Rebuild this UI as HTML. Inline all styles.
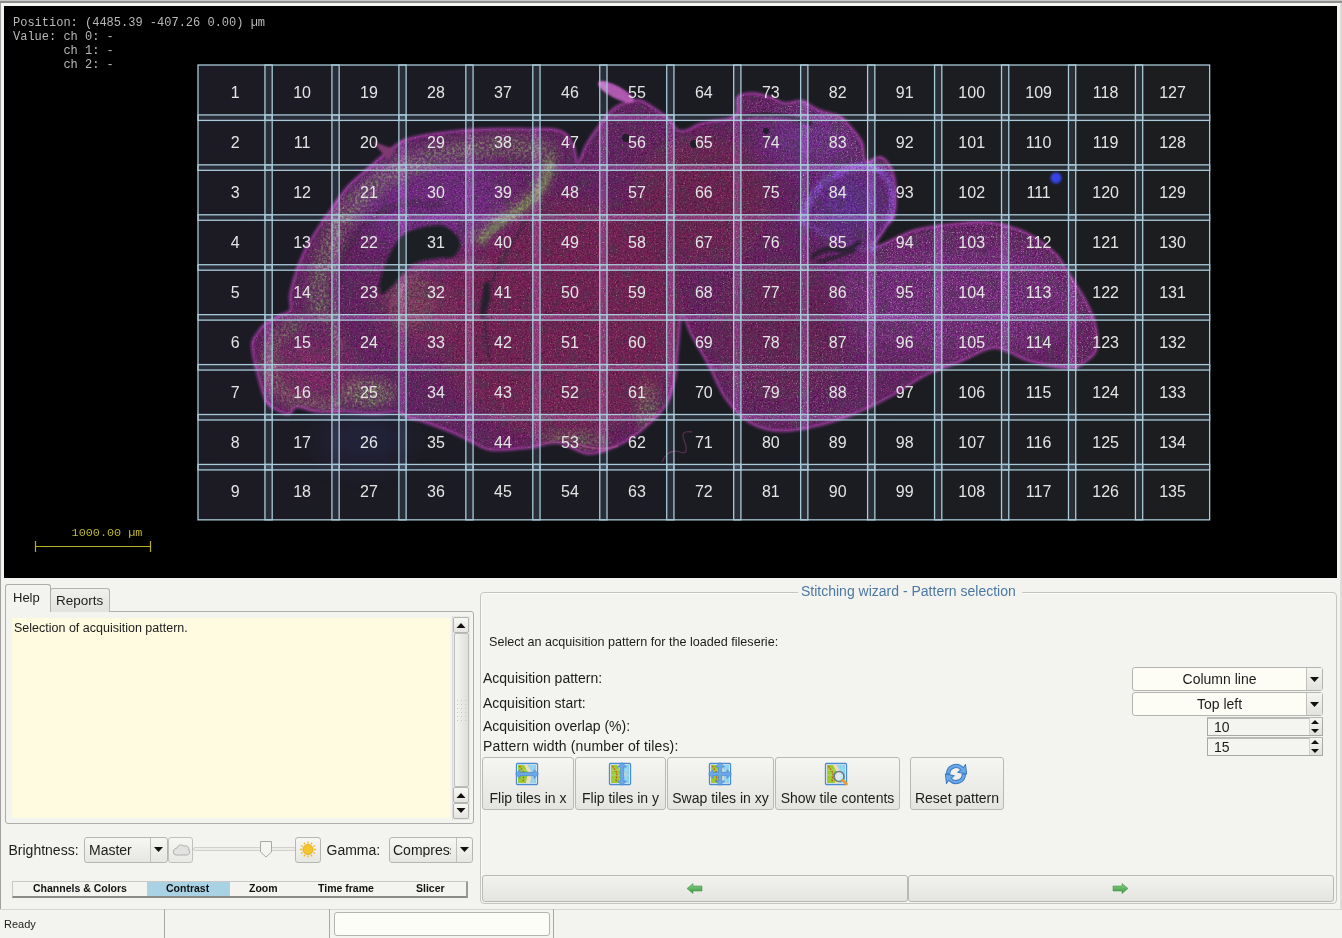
<!DOCTYPE html>
<html><head><meta charset="utf-8">
<style>
*{box-sizing:border-box;margin:0;padding:0}
html,body{width:1342px;height:938px;overflow:hidden;background:#f3f3ef;font-family:"Liberation Sans",sans-serif;color:#1a1a1a}
.a{position:absolute}
.t{position:absolute;white-space:nowrap;line-height:1}
#viewer{left:4px;top:6px;width:1333px;height:572px;background:#000;overflow:hidden}
#ov{left:9px;top:9.5px;font-family:"Liberation Mono",monospace;font-size:12px;line-height:14.3px;color:#b8b8b8;white-space:pre}
svg text{font-family:"Liberation Sans",sans-serif;font-size:16px;fill:#e4e4e4;text-anchor:middle}
.btn{position:absolute;border:1px solid #b4b4ae;border-radius:3px;background:linear-gradient(#f6f6f2,#e6e6e2)}
.lbl{position:absolute;white-space:nowrap;font-size:14px;line-height:1;color:#1c1c1c}
</style></head><body>
<div class="a" style="left:0;top:0;width:1342px;height:1px;background:#c9c9c7"></div>
<div class="a" style="left:0;top:1px;width:1342px;height:2px;background:#8e8e8c"></div>
<div class="a" style="left:0;top:3px;width:1px;height:906px;background:#a0a09e"></div>
<div class="a" style="left:1px;top:3px;width:1339px;height:3px;background:#f6f6f2"></div>
<div class="a" style="left:1340px;top:3px;width:2px;height:906px;background:#dcdcd8"></div>
<div id="viewer" class="a">
<svg width="1333" height="572" viewBox="4 6 1333 572" style="position:absolute;left:0;top:0">
<rect x="198.0" y="65.0" width="1011.6" height="454.8" fill="url(#bgG)"/>
<defs><linearGradient id="bgG" x1="0" y1="0" x2="1" y2="0"><stop offset="0" stop-color="#0d070e"/><stop offset="0.5" stop-color="#0c080b"/><stop offset="1" stop-color="#0c0a07"/></linearGradient></defs>
<g id="tis">
<defs>
 <clipPath id="tc"><path d="M252,347 C251.5,337.8 255.8,335.8 258,332 C260.2,328.2 261.7,326.7 265,324 C268.3,321.3 273.8,318.3 278,316 C282.2,313.7 288.0,313.5 290,310 C292.0,306.5 289.0,301.3 290,295 C291.0,288.7 293.5,279.5 296,272 C298.5,264.5 301.3,257.3 305,250 C308.7,242.7 313.5,235.0 318,228 C322.5,221.0 327.0,215.0 332,208 C337.0,201.0 342.3,192.3 348,186 C353.7,179.7 360.3,175.0 366,170 C371.7,165.0 375.5,161.0 382,156 C388.5,151.0 395.5,143.8 405,140 C414.5,136.2 426.0,134.8 439,133 C452.0,131.2 468.2,129.7 483,129 C497.8,128.3 516.5,129.0 528,129 C539.5,129.0 545.7,128.2 552,129 C558.3,129.8 562.3,131.0 566,134 C569.7,137.0 572.0,142.3 574,147 C576.0,151.7 576.0,162.3 578,162 C580.0,161.7 582.7,150.8 586,145 C589.3,139.2 593.5,133.0 598,127 C602.5,121.0 607.7,113.3 613,109 C618.3,104.7 625.2,102.3 630,101 C634.8,99.7 637.5,99.5 642,101 C646.5,102.5 652.5,107.0 657,110 C661.5,113.0 665.5,115.7 669,119 C672.5,122.3 675.0,128.2 678,130 C681.0,131.8 683.5,131.0 687,130 C690.5,129.0 694.5,125.5 699,124 C703.5,122.5 709.0,121.8 714,121 C719.0,120.2 725.2,120.5 729,119 C732.8,117.5 735.5,115.7 737,112 C738.5,108.3 735.3,100.2 738,97 C740.7,93.8 747.7,93.0 753,93 C758.3,93.0 764.7,95.3 770,97 C775.3,98.7 779.7,102.3 785,103 C790.3,103.7 796.3,99.8 802,101 C807.7,102.2 812.8,107.5 819,110 C825.2,112.5 834.0,113.5 839,116 C844.0,118.5 845.2,120.7 849,125 C852.8,129.3 859.2,136.0 862,142 C864.8,148.0 862.8,158.5 866,161 C869.2,163.5 876.7,155.5 881,157 C885.3,158.5 889.5,164.3 892,170 C894.5,175.7 895.7,183.3 896,191 C896.3,198.7 895.8,209.7 894,216 C892.2,222.3 887.8,224.0 885,229 C882.2,234.0 872.0,245.8 877,246 C882.0,246.2 900.8,233.8 915,230 C929.2,226.2 948.7,224.2 962,223 C975.3,221.8 983.8,221.2 995,223 C1006.2,224.8 1018.8,228.8 1029,234 C1039.2,239.2 1049.3,247.3 1056,254 C1062.7,260.7 1064.0,266.2 1069,274 C1074.0,281.8 1081.5,292.2 1086,301 C1090.5,309.8 1094.3,318.7 1096,327 C1097.7,335.3 1098.3,344.8 1096,351 C1093.7,357.2 1086.5,361.2 1082,364 C1077.5,366.8 1077.8,368.5 1069,368 C1060.2,367.5 1041.3,364.3 1029,361 C1016.7,357.7 1006.2,348.0 995,348 C983.8,348.0 973.2,356.7 962,361 C950.8,365.3 939.2,368.5 928,374 C916.8,379.5 906.2,387.8 895,394 C883.8,400.2 873.3,405.8 861,411 C848.7,416.2 834.3,421.7 821,425 C807.7,428.3 792.8,431.3 781,431 C769.2,430.7 759.2,428.3 750,423 C740.8,417.7 732.8,408.5 726,399 C719.2,389.5 714.7,376.5 709,366 C703.3,355.5 696.5,344.3 692,336 C687.5,327.7 684.3,314.0 682,316 C679.7,318.0 679.2,337.5 678,348 C676.8,358.5 677.2,369.2 675,379 C672.8,388.8 670.5,398.5 665,407 C659.5,415.5 650.0,423.5 642,430 C634.0,436.5 626.0,442.0 617,446 C608.0,450.0 597.8,454.5 588,454 C578.2,453.5 568.0,444.0 558,443 C548.0,442.0 539.2,446.8 528,448 C516.8,449.2 500.7,451.2 491,450 C481.3,448.8 476.7,444.0 470,441 C463.3,438.0 458.7,435.2 451,432 C443.3,428.8 431.0,424.3 424,422 C417.0,419.7 413.5,419.7 409,418 C404.5,416.3 402.8,412.7 397,412 C391.2,411.3 382.7,414.0 374,414 C365.3,414.0 354.5,412.3 345,412 C335.5,411.7 325.0,412.8 317,412 C309.0,411.2 301.8,406.7 297,407 C292.2,407.3 292.7,414.3 288,414 C283.3,413.7 273.5,409.5 269,405 C264.5,400.5 263.8,396.7 261,387 C258.2,377.3 252.5,356.2 252,347 Z"/><ellipse cx="616" cy="92" rx="20" ry="6" transform="rotate(28 616 92)"/></clipPath>
 <filter id="b6" x="-50%" y="-50%" width="200%" height="200%"><feGaussianBlur stdDeviation="6"/></filter>
 <filter id="b12" x="-50%" y="-50%" width="200%" height="200%"><feGaussianBlur stdDeviation="14"/></filter>
 <filter id="b3" x="-50%" y="-50%" width="200%" height="200%"><feGaussianBlur stdDeviation="2.5"/></filter>
 <filter id="b1" x="-50%" y="-50%" width="200%" height="200%"><feGaussianBlur stdDeviation="1"/></filter>
 <filter id="tex" x="0" y="0" width="100%" height="100%">
   <feTurbulence type="fractalNoise" baseFrequency="0.55" numOctaves="2" seed="4" result="n"/>
   <feColorMatrix in="n" type="matrix" values="2.4 0.5 0 0 -0.95  2.4 0 0.5 0 -0.95  2.4 0.5 0 0 -0.95  0 0 0 0 1" result="nc"/>
   <feComposite in="SourceGraphic" in2="nc" operator="arithmetic" k1="1.1" k2="0.48" k3="0" k4="0"/>
 </filter>
 <filter id="spkw" x="0" y="0" width="100%" height="100%">
   <feTurbulence type="fractalNoise" baseFrequency="0.8" numOctaves="1" seed="11"/>
   <feColorMatrix type="matrix" values="0 0 0 0 0.95  0 0 0 0 0.9  0 0 0 0 1  0 4.0 0 0 -2.3"/>
 </filter>
 <filter id="spkg" x="0" y="0" width="100%" height="100%">
   <feTurbulence type="fractalNoise" baseFrequency="0.38" numOctaves="2" seed="21"/>
   <feColorMatrix type="matrix" values="0 0 0 0 0.4  0 0 0 0 0.72  0 0 0 0 0.15  0 0 3.0 0 -1.25"/>
 </filter>
 <filter id="mot" x="0" y="0" width="100%" height="100%">
   <feTurbulence type="fractalNoise" baseFrequency="0.09" numOctaves="3" seed="17"/>
   <feColorMatrix type="matrix" values="0 0 0 0 0.05  0 0 0 0 0.02  0 0 0 0 0.05  2.2 0 0 0 -1.0"/>
 </filter>
 <filter id="spkg2" x="0" y="0" width="100%" height="100%">
   <feTurbulence type="fractalNoise" baseFrequency="0.85" numOctaves="1" seed="33"/>
   <feColorMatrix type="matrix" values="0 0 0 0 0.45  0 0 0 0 0.8  0 0 0 0 0.25  0 4.5 0 0 -2.7"/>
 </filter>
 <mask id="wm"><rect x="180" y="60" width="1040" height="480" fill="#000"/>
   <g filter="url(#b6)" fill="none" stroke="#fff">
     <path d="M880,250 C893.7,247.0 937.2,233.2 962,232 C986.8,230.8 1010.2,234.2 1029,243 C1047.8,251.8 1065.2,268.8 1075,285 C1084.8,301.2 1089.5,327.5 1088,340 C1086.5,352.5 1069.7,356.7 1066,360 " stroke-width="22" opacity="0.9"/>
     <path d="M745,108 C754.2,108.3 783.3,106.0 800,110 C816.7,114.0 835.0,122.0 845,132 C855.0,142.0 857.5,163.7 860,170 " stroke-width="20" opacity="0.7"/>
   </g>
   <g filter="url(#b12)" fill="#fff">
     <ellipse cx="960" cy="300" rx="120" ry="55" opacity="0.75"/>
     <ellipse cx="800" cy="380" rx="80" ry="40" opacity="0.6"/>
     <ellipse cx="740" cy="260" rx="50" ry="60" opacity="0.35"/>
     <ellipse cx="660" cy="150" rx="50" ry="40" opacity="0.35"/>
     <ellipse cx="840" cy="150" rx="40" ry="30" opacity="0.5"/>
     <ellipse cx="560" cy="400" rx="60" ry="40" opacity="0.25"/>
   </g>
 </mask>
 <mask id="gm"><rect x="180" y="60" width="1040" height="480" fill="#000"/>
   <g filter="url(#b6)" fill="none" stroke="#fff" stroke-linecap="round">
     <path d="M322,312 C321.3,308.3 316.7,301.2 318,290 C319.3,278.8 324.7,258.3 330,245 C335.3,231.7 342.5,220.0 350,210 C357.5,200.0 365.0,192.5 375,185 C385.0,177.5 396.7,170.5 410,165 C423.3,159.5 439.2,155.2 455,152 C470.8,148.8 489.8,146.0 505,146 C520.2,146.0 539.2,151.0 546,152 " stroke-width="20" opacity="0.75"/>
     <path d="M550,160 C548.7,164.2 546.7,177.3 542,185 C537.3,192.7 529.7,199.8 522,206 C514.3,212.2 503.3,216.3 496,222 C488.7,227.7 481.0,237.0 478,240 " stroke-width="12"/>
     <path d="M300,322 C296.3,324.2 283.0,328.7 278,335 C273.0,341.3 270.3,351.5 270,360 C269.7,368.5 271.0,379.0 276,386 C281.0,393.0 289.3,399.0 300,402 C310.7,405.0 333.3,403.7 340,404 " stroke-width="11" opacity="0.8"/>
     <path d="M330,322 C331.3,324.7 337.0,333.0 338,338 C339.0,343.0 336.3,349.7 336,352 " stroke-width="10" opacity="0.5"/>
   </g>
   <g filter="url(#b6)" fill="#fff">
     <ellipse cx="368" cy="393" rx="28" ry="14"/>
     <ellipse cx="648" cy="408" rx="10" ry="28" opacity="0.8"/>
     <ellipse cx="575" cy="440" rx="35" ry="7" opacity="0.8"/>
     <ellipse cx="410" cy="300" rx="25" ry="30" opacity="0.35"/>
   </g>
 </mask>
</defs>
<g clip-path="url(#tc)">
 <g filter="url(#tex)">
  <rect x="240" y="80" width="870" height="380" fill="#5a0e50"/>
  <g filter="url(#b12)">
    <ellipse cx="560" cy="320" rx="125" ry="120" fill="#6a0c40"/>
    <ellipse cx="700" cy="200" rx="70" ry="65" fill="#640c3e"/>
    <ellipse cx="310" cy="370" rx="45" ry="35" fill="#761452"/>
    <ellipse cx="950" cy="300" rx="130" ry="60" fill="#6a1268"/>
    <ellipse cx="780" cy="330" rx="70" ry="70" fill="#5c0a42"/>
    <ellipse cx="850" cy="205" rx="38" ry="34" fill="#561a80"/>
    <ellipse cx="810" cy="140" rx="50" ry="28" fill="#661e78"/>
    <ellipse cx="430" cy="200" rx="85" ry="50" fill="#681670"/>
    <ellipse cx="420" cy="310" rx="40" ry="40" fill="#701448"/>
  </g>
  <path d="M800,222 C803.7,215.7 812.0,193.3 822,184 C832.0,174.7 849.5,167.5 860,166 C870.5,164.5 879.5,169.3 885,175 C890.5,180.7 892.8,190.5 893,200 C893.2,209.5 889.8,223.7 886,232 C882.2,240.3 872.7,247.0 870,250 " fill="none" stroke="#8643d3" stroke-width="6" filter="url(#b3)" opacity="0.85"/>
  <path d="M802,222 C806.7,224.3 819.5,231.3 830,236 C840.5,240.7 859.2,247.7 865,250 " fill="none" stroke="#7a3ac0" stroke-width="4" filter="url(#b3)" opacity="0.6"/>
  <!-- cortex inner boundary (darker) -->
  <path d="M334,400 C334.0,385.2 332.3,334.8 334,311 C335.7,287.2 338.3,271.8 344,257 C349.7,242.2 358.3,230.7 368,222 C377.7,213.3 389.5,207.8 402,205 C414.5,202.2 436.2,205.0 443,205 " fill="none" stroke="#30102c" stroke-width="5" filter="url(#b3)" opacity="0.6"/>
  <!-- hippocampus lobe boundary -->
  <path d="M392,304 C396.5,298.3 407.7,276.8 419,270 C430.3,263.2 448.2,264.3 460,263 C471.8,261.7 485.0,262.2 490,262 " fill="none" stroke="#a0307a" stroke-width="4" filter="url(#b3)" opacity="0.7"/>
  <path d="M525,222 C521.7,227.5 510.7,244.7 505,255 C499.3,265.3 494.3,273.2 491,284 C487.7,294.8 485.2,307.3 485,320 C484.8,332.7 489.2,353.3 490,360 " fill="none" stroke="#28102a" stroke-width="3.5" filter="url(#b1)" opacity="0.55"/>
 </g>
  <rect x="240" y="80" width="870" height="380" filter="url(#mot)" opacity="0.6"/>
  <rect x="240" y="80" width="870" height="380" filter="url(#spkg2)" opacity="0.4"/>
  <rect x="240" y="80" width="870" height="380" filter="url(#spkw)" mask="url(#wm)" opacity="0.6"/>
  <rect x="240" y="80" width="870" height="380" fill="#70b040" opacity="0.16" mask="url(#gm)"/>
  <rect x="240" y="80" width="870" height="380" filter="url(#spkg)" mask="url(#gm)" opacity="0.6"/>
  <path d="M551,158 C549.8,162.3 548.5,176.0 544,184 C539.5,192.0 531.7,199.3 524,206 C516.3,212.7 505.3,218.0 498,224 C490.7,230.0 483.0,239.0 480,242 " fill="none" stroke="#88d040" stroke-width="7" opacity="0.35" filter="url(#b3)"/>
  <!-- dark features -->
  <path d="M457,236 C454.2,232.7 449.2,227.3 443,226 C436.8,224.7 426.8,226.3 420,228 C413.2,229.7 407.3,231.0 402,236 C396.7,241.0 391.7,250.3 388,258 C384.3,265.7 381.0,276.0 380,282 C379.0,288.0 380.0,293.3 382,294 C384.0,294.7 386.8,291.0 392,286 C397.2,281.0 405.3,268.7 413,264 C420.7,259.3 431.3,259.2 438,258 C444.7,256.8 449.3,259.0 453,257 C456.7,255.0 459.3,249.5 460,246 C460.7,242.5 459.8,239.3 457,236 Z" fill="#0c0810" filter="url(#b1)"/>
  <path d="M484,283 L489,281 L490,300 L482,320 L480,314 Z" fill="#140a14" filter="url(#b1)"/>
  <path d="M812,258 Q822,246 838,250 Q848,252 860,242" fill="none" stroke="#140a14" stroke-width="4" filter="url(#b1)"/>
  <path d="M818,262 Q835,258 856,250" fill="none" stroke="#140a14" stroke-width="2.5" filter="url(#b1)"/>
  <circle cx="626" cy="138" r="4" fill="#140a14"/>
  <circle cx="694" cy="144" r="4" fill="#140a14"/>
  <circle cx="766" cy="131" r="3" fill="#140a14"/>
  <path d="M738,118 Q760,112 785,116 Q800,119 812,124" stroke="#1a0c1a" stroke-width="3.5" fill="none" filter="url(#b1)"/>
</g>
<path d="M252,347 C251.5,337.8 255.8,335.8 258,332 C260.2,328.2 261.7,326.7 265,324 C268.3,321.3 273.8,318.3 278,316 C282.2,313.7 288.0,313.5 290,310 C292.0,306.5 289.0,301.3 290,295 C291.0,288.7 293.5,279.5 296,272 C298.5,264.5 301.3,257.3 305,250 C308.7,242.7 313.5,235.0 318,228 C322.5,221.0 327.0,215.0 332,208 C337.0,201.0 342.3,192.3 348,186 C353.7,179.7 360.3,175.0 366,170 C371.7,165.0 375.5,161.0 382,156 C388.5,151.0 395.5,143.8 405,140 C414.5,136.2 426.0,134.8 439,133 C452.0,131.2 468.2,129.7 483,129 C497.8,128.3 516.5,129.0 528,129 C539.5,129.0 545.7,128.2 552,129 C558.3,129.8 562.3,131.0 566,134 C569.7,137.0 572.0,142.3 574,147 C576.0,151.7 576.0,162.3 578,162 C580.0,161.7 582.7,150.8 586,145 C589.3,139.2 593.5,133.0 598,127 C602.5,121.0 607.7,113.3 613,109 C618.3,104.7 625.2,102.3 630,101 C634.8,99.7 637.5,99.5 642,101 C646.5,102.5 652.5,107.0 657,110 C661.5,113.0 665.5,115.7 669,119 C672.5,122.3 675.0,128.2 678,130 C681.0,131.8 683.5,131.0 687,130 C690.5,129.0 694.5,125.5 699,124 C703.5,122.5 709.0,121.8 714,121 C719.0,120.2 725.2,120.5 729,119 C732.8,117.5 735.5,115.7 737,112 C738.5,108.3 735.3,100.2 738,97 C740.7,93.8 747.7,93.0 753,93 C758.3,93.0 764.7,95.3 770,97 C775.3,98.7 779.7,102.3 785,103 C790.3,103.7 796.3,99.8 802,101 C807.7,102.2 812.8,107.5 819,110 C825.2,112.5 834.0,113.5 839,116 C844.0,118.5 845.2,120.7 849,125 C852.8,129.3 859.2,136.0 862,142 C864.8,148.0 862.8,158.5 866,161 C869.2,163.5 876.7,155.5 881,157 C885.3,158.5 889.5,164.3 892,170 C894.5,175.7 895.7,183.3 896,191 C896.3,198.7 895.8,209.7 894,216 C892.2,222.3 887.8,224.0 885,229 C882.2,234.0 872.0,245.8 877,246 C882.0,246.2 900.8,233.8 915,230 C929.2,226.2 948.7,224.2 962,223 C975.3,221.8 983.8,221.2 995,223 C1006.2,224.8 1018.8,228.8 1029,234 C1039.2,239.2 1049.3,247.3 1056,254 C1062.7,260.7 1064.0,266.2 1069,274 C1074.0,281.8 1081.5,292.2 1086,301 C1090.5,309.8 1094.3,318.7 1096,327 C1097.7,335.3 1098.3,344.8 1096,351 C1093.7,357.2 1086.5,361.2 1082,364 C1077.5,366.8 1077.8,368.5 1069,368 C1060.2,367.5 1041.3,364.3 1029,361 C1016.7,357.7 1006.2,348.0 995,348 C983.8,348.0 973.2,356.7 962,361 C950.8,365.3 939.2,368.5 928,374 C916.8,379.5 906.2,387.8 895,394 C883.8,400.2 873.3,405.8 861,411 C848.7,416.2 834.3,421.7 821,425 C807.7,428.3 792.8,431.3 781,431 C769.2,430.7 759.2,428.3 750,423 C740.8,417.7 732.8,408.5 726,399 C719.2,389.5 714.7,376.5 709,366 C703.3,355.5 696.5,344.3 692,336 C687.5,327.7 684.3,314.0 682,316 C679.7,318.0 679.2,337.5 678,348 C676.8,358.5 677.2,369.2 675,379 C672.8,388.8 670.5,398.5 665,407 C659.5,415.5 650.0,423.5 642,430 C634.0,436.5 626.0,442.0 617,446 C608.0,450.0 597.8,454.5 588,454 C578.2,453.5 568.0,444.0 558,443 C548.0,442.0 539.2,446.8 528,448 C516.8,449.2 500.7,451.2 491,450 C481.3,448.8 476.7,444.0 470,441 C463.3,438.0 458.7,435.2 451,432 C443.3,428.8 431.0,424.3 424,422 C417.0,419.7 413.5,419.7 409,418 C404.5,416.3 402.8,412.7 397,412 C391.2,411.3 382.7,414.0 374,414 C365.3,414.0 354.5,412.3 345,412 C335.5,411.7 325.0,412.8 317,412 C309.0,411.2 301.8,406.7 297,407 C292.2,407.3 292.7,414.3 288,414 C283.3,413.7 273.5,409.5 269,405 C264.5,400.5 263.8,396.7 261,387 C258.2,377.3 252.5,356.2 252,347 Z" fill="none" stroke="#c83cc0" stroke-width="3" opacity="0.5" filter="url(#b1)"/>
<ellipse cx="616" cy="92" rx="20" ry="6" transform="rotate(28 616 92)" fill="#d060c8" opacity="0.75" filter="url(#b1)"/>
<circle cx="1056" cy="178" r="5.5" fill="#2a36e8" filter="url(#b1)"/>
<path d="M662,462 Q668,448 680,452 Q690,456 684,440 Q680,430 692,432" fill="none" stroke="#7a2860" stroke-width="1.3" opacity="0.6"/>
<path d="M578,444 Q600,452 618,446" fill="none" stroke="#c04a90" stroke-width="2" opacity="0.5"/>
<path d="M372,141 L396,150 L388,160Z" fill="#7a2a62" filter="url(#b1)"/>
<ellipse cx="365" cy="440" rx="45" ry="25" fill="#2a2a70" opacity="0.25" filter="url(#b12)"/>
</g>
<defs><clipPath id="strips"><rect x="264.96" y="60" width="7.24" height="470"/><rect x="331.92" y="60" width="7.24" height="470"/><rect x="398.88" y="60" width="7.24" height="470"/><rect x="465.84" y="60" width="7.24" height="470"/><rect x="532.80" y="60" width="7.24" height="470"/><rect x="599.76" y="60" width="7.24" height="470"/><rect x="666.72" y="60" width="7.24" height="470"/><rect x="733.68" y="60" width="7.24" height="470"/><rect x="800.64" y="60" width="7.24" height="470"/><rect x="867.60" y="60" width="7.24" height="470"/><rect x="934.56" y="60" width="7.24" height="470"/><rect x="1001.52" y="60" width="7.24" height="470"/><rect x="1068.48" y="60" width="7.24" height="470"/><rect x="1135.44" y="60" width="7.24" height="470"/><rect x="190" y="114.93" width="1030" height="5.47"/><rect x="190" y="164.86" width="1030" height="5.47"/><rect x="190" y="214.79" width="1030" height="5.47"/><rect x="190" y="264.72" width="1030" height="5.47"/><rect x="190" y="314.65" width="1030" height="5.47"/><rect x="190" y="364.58" width="1030" height="5.47"/><rect x="190" y="414.51" width="1030" height="5.47"/><rect x="190" y="464.44" width="1030" height="5.47"/></clipPath></defs>
<use href="#tis" clip-path="url(#strips)" style="mix-blend-mode:screen" opacity="0.55"/>
<rect x="198.00" y="65.00" width="74.20" height="55.40" fill="#9bc1e7" fill-opacity="0.11"/>
<rect x="198.00" y="114.93" width="74.20" height="55.40" fill="#9bc1e7" fill-opacity="0.11"/>
<rect x="198.00" y="164.86" width="74.20" height="55.40" fill="#9bc1e7" fill-opacity="0.11"/>
<rect x="198.00" y="214.79" width="74.20" height="55.40" fill="#9bc1e7" fill-opacity="0.11"/>
<rect x="198.00" y="264.72" width="74.20" height="55.40" fill="#9bc1e7" fill-opacity="0.11"/>
<rect x="198.00" y="314.65" width="74.20" height="55.40" fill="#9bc1e7" fill-opacity="0.11"/>
<rect x="198.00" y="364.58" width="74.20" height="55.40" fill="#9bc1e7" fill-opacity="0.11"/>
<rect x="198.00" y="414.51" width="74.20" height="55.40" fill="#9bc1e7" fill-opacity="0.11"/>
<rect x="198.00" y="464.44" width="74.20" height="55.40" fill="#9bc1e7" fill-opacity="0.11"/>
<rect x="264.96" y="65.00" width="74.20" height="55.40" fill="#9bc1e7" fill-opacity="0.11"/>
<rect x="264.96" y="114.93" width="74.20" height="55.40" fill="#9bc1e7" fill-opacity="0.11"/>
<rect x="264.96" y="164.86" width="74.20" height="55.40" fill="#9bc1e7" fill-opacity="0.11"/>
<rect x="264.96" y="214.79" width="74.20" height="55.40" fill="#9bc1e7" fill-opacity="0.11"/>
<rect x="264.96" y="264.72" width="74.20" height="55.40" fill="#9bc1e7" fill-opacity="0.11"/>
<rect x="264.96" y="314.65" width="74.20" height="55.40" fill="#9bc1e7" fill-opacity="0.11"/>
<rect x="264.96" y="364.58" width="74.20" height="55.40" fill="#9bc1e7" fill-opacity="0.11"/>
<rect x="264.96" y="414.51" width="74.20" height="55.40" fill="#9bc1e7" fill-opacity="0.11"/>
<rect x="264.96" y="464.44" width="74.20" height="55.40" fill="#9bc1e7" fill-opacity="0.11"/>
<rect x="331.92" y="65.00" width="74.20" height="55.40" fill="#9bc1e7" fill-opacity="0.11"/>
<rect x="331.92" y="114.93" width="74.20" height="55.40" fill="#9bc1e7" fill-opacity="0.11"/>
<rect x="331.92" y="164.86" width="74.20" height="55.40" fill="#9bc1e7" fill-opacity="0.11"/>
<rect x="331.92" y="214.79" width="74.20" height="55.40" fill="#9bc1e7" fill-opacity="0.11"/>
<rect x="331.92" y="264.72" width="74.20" height="55.40" fill="#9bc1e7" fill-opacity="0.11"/>
<rect x="331.92" y="314.65" width="74.20" height="55.40" fill="#9bc1e7" fill-opacity="0.11"/>
<rect x="331.92" y="364.58" width="74.20" height="55.40" fill="#9bc1e7" fill-opacity="0.11"/>
<rect x="331.92" y="414.51" width="74.20" height="55.40" fill="#9bc1e7" fill-opacity="0.11"/>
<rect x="331.92" y="464.44" width="74.20" height="55.40" fill="#9bc1e7" fill-opacity="0.11"/>
<rect x="398.88" y="65.00" width="74.20" height="55.40" fill="#9bc1e7" fill-opacity="0.11"/>
<rect x="398.88" y="114.93" width="74.20" height="55.40" fill="#9bc1e7" fill-opacity="0.11"/>
<rect x="398.88" y="164.86" width="74.20" height="55.40" fill="#9bc1e7" fill-opacity="0.11"/>
<rect x="398.88" y="214.79" width="74.20" height="55.40" fill="#9bc1e7" fill-opacity="0.11"/>
<rect x="398.88" y="264.72" width="74.20" height="55.40" fill="#9bc1e7" fill-opacity="0.11"/>
<rect x="398.88" y="314.65" width="74.20" height="55.40" fill="#9bc1e7" fill-opacity="0.11"/>
<rect x="398.88" y="364.58" width="74.20" height="55.40" fill="#9bc1e7" fill-opacity="0.11"/>
<rect x="398.88" y="414.51" width="74.20" height="55.40" fill="#9bc1e7" fill-opacity="0.11"/>
<rect x="398.88" y="464.44" width="74.20" height="55.40" fill="#9bc1e7" fill-opacity="0.11"/>
<rect x="465.84" y="65.00" width="74.20" height="55.40" fill="#9bc1e7" fill-opacity="0.11"/>
<rect x="465.84" y="114.93" width="74.20" height="55.40" fill="#9bc1e7" fill-opacity="0.11"/>
<rect x="465.84" y="164.86" width="74.20" height="55.40" fill="#9bc1e7" fill-opacity="0.11"/>
<rect x="465.84" y="214.79" width="74.20" height="55.40" fill="#9bc1e7" fill-opacity="0.11"/>
<rect x="465.84" y="264.72" width="74.20" height="55.40" fill="#9bc1e7" fill-opacity="0.11"/>
<rect x="465.84" y="314.65" width="74.20" height="55.40" fill="#9bc1e7" fill-opacity="0.11"/>
<rect x="465.84" y="364.58" width="74.20" height="55.40" fill="#9bc1e7" fill-opacity="0.11"/>
<rect x="465.84" y="414.51" width="74.20" height="55.40" fill="#9bc1e7" fill-opacity="0.11"/>
<rect x="465.84" y="464.44" width="74.20" height="55.40" fill="#9bc1e7" fill-opacity="0.11"/>
<rect x="532.80" y="65.00" width="74.20" height="55.40" fill="#9bc1e7" fill-opacity="0.11"/>
<rect x="532.80" y="114.93" width="74.20" height="55.40" fill="#9bc1e7" fill-opacity="0.11"/>
<rect x="532.80" y="164.86" width="74.20" height="55.40" fill="#9bc1e7" fill-opacity="0.11"/>
<rect x="532.80" y="214.79" width="74.20" height="55.40" fill="#9bc1e7" fill-opacity="0.11"/>
<rect x="532.80" y="264.72" width="74.20" height="55.40" fill="#9bc1e7" fill-opacity="0.11"/>
<rect x="532.80" y="314.65" width="74.20" height="55.40" fill="#9bc1e7" fill-opacity="0.11"/>
<rect x="532.80" y="364.58" width="74.20" height="55.40" fill="#9bc1e7" fill-opacity="0.11"/>
<rect x="532.80" y="414.51" width="74.20" height="55.40" fill="#9bc1e7" fill-opacity="0.11"/>
<rect x="532.80" y="464.44" width="74.20" height="55.40" fill="#9bc1e7" fill-opacity="0.11"/>
<rect x="599.76" y="65.00" width="74.20" height="55.40" fill="#9bc1e7" fill-opacity="0.11"/>
<rect x="599.76" y="114.93" width="74.20" height="55.40" fill="#9bc1e7" fill-opacity="0.11"/>
<rect x="599.76" y="164.86" width="74.20" height="55.40" fill="#9bc1e7" fill-opacity="0.11"/>
<rect x="599.76" y="214.79" width="74.20" height="55.40" fill="#9bc1e7" fill-opacity="0.11"/>
<rect x="599.76" y="264.72" width="74.20" height="55.40" fill="#9bc1e7" fill-opacity="0.11"/>
<rect x="599.76" y="314.65" width="74.20" height="55.40" fill="#9bc1e7" fill-opacity="0.11"/>
<rect x="599.76" y="364.58" width="74.20" height="55.40" fill="#9bc1e7" fill-opacity="0.11"/>
<rect x="599.76" y="414.51" width="74.20" height="55.40" fill="#9bc1e7" fill-opacity="0.11"/>
<rect x="599.76" y="464.44" width="74.20" height="55.40" fill="#9bc1e7" fill-opacity="0.11"/>
<rect x="666.72" y="65.00" width="74.20" height="55.40" fill="#9bc1e7" fill-opacity="0.11"/>
<rect x="666.72" y="114.93" width="74.20" height="55.40" fill="#9bc1e7" fill-opacity="0.11"/>
<rect x="666.72" y="164.86" width="74.20" height="55.40" fill="#9bc1e7" fill-opacity="0.11"/>
<rect x="666.72" y="214.79" width="74.20" height="55.40" fill="#9bc1e7" fill-opacity="0.11"/>
<rect x="666.72" y="264.72" width="74.20" height="55.40" fill="#9bc1e7" fill-opacity="0.11"/>
<rect x="666.72" y="314.65" width="74.20" height="55.40" fill="#9bc1e7" fill-opacity="0.11"/>
<rect x="666.72" y="364.58" width="74.20" height="55.40" fill="#9bc1e7" fill-opacity="0.11"/>
<rect x="666.72" y="414.51" width="74.20" height="55.40" fill="#9bc1e7" fill-opacity="0.11"/>
<rect x="666.72" y="464.44" width="74.20" height="55.40" fill="#9bc1e7" fill-opacity="0.11"/>
<rect x="733.68" y="65.00" width="74.20" height="55.40" fill="#9bc1e7" fill-opacity="0.11"/>
<rect x="733.68" y="114.93" width="74.20" height="55.40" fill="#9bc1e7" fill-opacity="0.11"/>
<rect x="733.68" y="164.86" width="74.20" height="55.40" fill="#9bc1e7" fill-opacity="0.11"/>
<rect x="733.68" y="214.79" width="74.20" height="55.40" fill="#9bc1e7" fill-opacity="0.11"/>
<rect x="733.68" y="264.72" width="74.20" height="55.40" fill="#9bc1e7" fill-opacity="0.11"/>
<rect x="733.68" y="314.65" width="74.20" height="55.40" fill="#9bc1e7" fill-opacity="0.11"/>
<rect x="733.68" y="364.58" width="74.20" height="55.40" fill="#9bc1e7" fill-opacity="0.11"/>
<rect x="733.68" y="414.51" width="74.20" height="55.40" fill="#9bc1e7" fill-opacity="0.11"/>
<rect x="733.68" y="464.44" width="74.20" height="55.40" fill="#9bc1e7" fill-opacity="0.11"/>
<rect x="800.64" y="65.00" width="74.20" height="55.40" fill="#9bc1e7" fill-opacity="0.11"/>
<rect x="800.64" y="114.93" width="74.20" height="55.40" fill="#9bc1e7" fill-opacity="0.11"/>
<rect x="800.64" y="164.86" width="74.20" height="55.40" fill="#9bc1e7" fill-opacity="0.11"/>
<rect x="800.64" y="214.79" width="74.20" height="55.40" fill="#9bc1e7" fill-opacity="0.11"/>
<rect x="800.64" y="264.72" width="74.20" height="55.40" fill="#9bc1e7" fill-opacity="0.11"/>
<rect x="800.64" y="314.65" width="74.20" height="55.40" fill="#9bc1e7" fill-opacity="0.11"/>
<rect x="800.64" y="364.58" width="74.20" height="55.40" fill="#9bc1e7" fill-opacity="0.11"/>
<rect x="800.64" y="414.51" width="74.20" height="55.40" fill="#9bc1e7" fill-opacity="0.11"/>
<rect x="800.64" y="464.44" width="74.20" height="55.40" fill="#9bc1e7" fill-opacity="0.11"/>
<rect x="867.60" y="65.00" width="74.20" height="55.40" fill="#9bc1e7" fill-opacity="0.11"/>
<rect x="867.60" y="114.93" width="74.20" height="55.40" fill="#9bc1e7" fill-opacity="0.11"/>
<rect x="867.60" y="164.86" width="74.20" height="55.40" fill="#9bc1e7" fill-opacity="0.11"/>
<rect x="867.60" y="214.79" width="74.20" height="55.40" fill="#9bc1e7" fill-opacity="0.11"/>
<rect x="867.60" y="264.72" width="74.20" height="55.40" fill="#9bc1e7" fill-opacity="0.11"/>
<rect x="867.60" y="314.65" width="74.20" height="55.40" fill="#9bc1e7" fill-opacity="0.11"/>
<rect x="867.60" y="364.58" width="74.20" height="55.40" fill="#9bc1e7" fill-opacity="0.11"/>
<rect x="867.60" y="414.51" width="74.20" height="55.40" fill="#9bc1e7" fill-opacity="0.11"/>
<rect x="867.60" y="464.44" width="74.20" height="55.40" fill="#9bc1e7" fill-opacity="0.11"/>
<rect x="934.56" y="65.00" width="74.20" height="55.40" fill="#9bc1e7" fill-opacity="0.11"/>
<rect x="934.56" y="114.93" width="74.20" height="55.40" fill="#9bc1e7" fill-opacity="0.11"/>
<rect x="934.56" y="164.86" width="74.20" height="55.40" fill="#9bc1e7" fill-opacity="0.11"/>
<rect x="934.56" y="214.79" width="74.20" height="55.40" fill="#9bc1e7" fill-opacity="0.11"/>
<rect x="934.56" y="264.72" width="74.20" height="55.40" fill="#9bc1e7" fill-opacity="0.11"/>
<rect x="934.56" y="314.65" width="74.20" height="55.40" fill="#9bc1e7" fill-opacity="0.11"/>
<rect x="934.56" y="364.58" width="74.20" height="55.40" fill="#9bc1e7" fill-opacity="0.11"/>
<rect x="934.56" y="414.51" width="74.20" height="55.40" fill="#9bc1e7" fill-opacity="0.11"/>
<rect x="934.56" y="464.44" width="74.20" height="55.40" fill="#9bc1e7" fill-opacity="0.11"/>
<rect x="1001.52" y="65.00" width="74.20" height="55.40" fill="#9bc1e7" fill-opacity="0.11"/>
<rect x="1001.52" y="114.93" width="74.20" height="55.40" fill="#9bc1e7" fill-opacity="0.11"/>
<rect x="1001.52" y="164.86" width="74.20" height="55.40" fill="#9bc1e7" fill-opacity="0.11"/>
<rect x="1001.52" y="214.79" width="74.20" height="55.40" fill="#9bc1e7" fill-opacity="0.11"/>
<rect x="1001.52" y="264.72" width="74.20" height="55.40" fill="#9bc1e7" fill-opacity="0.11"/>
<rect x="1001.52" y="314.65" width="74.20" height="55.40" fill="#9bc1e7" fill-opacity="0.11"/>
<rect x="1001.52" y="364.58" width="74.20" height="55.40" fill="#9bc1e7" fill-opacity="0.11"/>
<rect x="1001.52" y="414.51" width="74.20" height="55.40" fill="#9bc1e7" fill-opacity="0.11"/>
<rect x="1001.52" y="464.44" width="74.20" height="55.40" fill="#9bc1e7" fill-opacity="0.11"/>
<rect x="1068.48" y="65.00" width="74.20" height="55.40" fill="#9bc1e7" fill-opacity="0.11"/>
<rect x="1068.48" y="114.93" width="74.20" height="55.40" fill="#9bc1e7" fill-opacity="0.11"/>
<rect x="1068.48" y="164.86" width="74.20" height="55.40" fill="#9bc1e7" fill-opacity="0.11"/>
<rect x="1068.48" y="214.79" width="74.20" height="55.40" fill="#9bc1e7" fill-opacity="0.11"/>
<rect x="1068.48" y="264.72" width="74.20" height="55.40" fill="#9bc1e7" fill-opacity="0.11"/>
<rect x="1068.48" y="314.65" width="74.20" height="55.40" fill="#9bc1e7" fill-opacity="0.11"/>
<rect x="1068.48" y="364.58" width="74.20" height="55.40" fill="#9bc1e7" fill-opacity="0.11"/>
<rect x="1068.48" y="414.51" width="74.20" height="55.40" fill="#9bc1e7" fill-opacity="0.11"/>
<rect x="1068.48" y="464.44" width="74.20" height="55.40" fill="#9bc1e7" fill-opacity="0.11"/>
<rect x="1135.44" y="65.00" width="74.20" height="55.40" fill="#9bc1e7" fill-opacity="0.11"/>
<rect x="1135.44" y="114.93" width="74.20" height="55.40" fill="#9bc1e7" fill-opacity="0.11"/>
<rect x="1135.44" y="164.86" width="74.20" height="55.40" fill="#9bc1e7" fill-opacity="0.11"/>
<rect x="1135.44" y="214.79" width="74.20" height="55.40" fill="#9bc1e7" fill-opacity="0.11"/>
<rect x="1135.44" y="264.72" width="74.20" height="55.40" fill="#9bc1e7" fill-opacity="0.11"/>
<rect x="1135.44" y="314.65" width="74.20" height="55.40" fill="#9bc1e7" fill-opacity="0.11"/>
<rect x="1135.44" y="364.58" width="74.20" height="55.40" fill="#9bc1e7" fill-opacity="0.11"/>
<rect x="1135.44" y="414.51" width="74.20" height="55.40" fill="#9bc1e7" fill-opacity="0.11"/>
<rect x="1135.44" y="464.44" width="74.20" height="55.40" fill="#9bc1e7" fill-opacity="0.11"/>
<rect x="198.00" y="65.00" width="74.20" height="55.40" fill="none" stroke="#a9cad8" stroke-width="1.3"/>
<rect x="198.00" y="114.93" width="74.20" height="55.40" fill="none" stroke="#a9cad8" stroke-width="1.3"/>
<rect x="198.00" y="164.86" width="74.20" height="55.40" fill="none" stroke="#a9cad8" stroke-width="1.3"/>
<rect x="198.00" y="214.79" width="74.20" height="55.40" fill="none" stroke="#a9cad8" stroke-width="1.3"/>
<rect x="198.00" y="264.72" width="74.20" height="55.40" fill="none" stroke="#a9cad8" stroke-width="1.3"/>
<rect x="198.00" y="314.65" width="74.20" height="55.40" fill="none" stroke="#a9cad8" stroke-width="1.3"/>
<rect x="198.00" y="364.58" width="74.20" height="55.40" fill="none" stroke="#a9cad8" stroke-width="1.3"/>
<rect x="198.00" y="414.51" width="74.20" height="55.40" fill="none" stroke="#a9cad8" stroke-width="1.3"/>
<rect x="198.00" y="464.44" width="74.20" height="55.40" fill="none" stroke="#a9cad8" stroke-width="1.3"/>
<rect x="264.96" y="65.00" width="74.20" height="55.40" fill="none" stroke="#a9cad8" stroke-width="1.3"/>
<rect x="264.96" y="114.93" width="74.20" height="55.40" fill="none" stroke="#a9cad8" stroke-width="1.3"/>
<rect x="264.96" y="164.86" width="74.20" height="55.40" fill="none" stroke="#a9cad8" stroke-width="1.3"/>
<rect x="264.96" y="214.79" width="74.20" height="55.40" fill="none" stroke="#a9cad8" stroke-width="1.3"/>
<rect x="264.96" y="264.72" width="74.20" height="55.40" fill="none" stroke="#a9cad8" stroke-width="1.3"/>
<rect x="264.96" y="314.65" width="74.20" height="55.40" fill="none" stroke="#a9cad8" stroke-width="1.3"/>
<rect x="264.96" y="364.58" width="74.20" height="55.40" fill="none" stroke="#a9cad8" stroke-width="1.3"/>
<rect x="264.96" y="414.51" width="74.20" height="55.40" fill="none" stroke="#a9cad8" stroke-width="1.3"/>
<rect x="264.96" y="464.44" width="74.20" height="55.40" fill="none" stroke="#a9cad8" stroke-width="1.3"/>
<rect x="331.92" y="65.00" width="74.20" height="55.40" fill="none" stroke="#a9cad8" stroke-width="1.3"/>
<rect x="331.92" y="114.93" width="74.20" height="55.40" fill="none" stroke="#a9cad8" stroke-width="1.3"/>
<rect x="331.92" y="164.86" width="74.20" height="55.40" fill="none" stroke="#a9cad8" stroke-width="1.3"/>
<rect x="331.92" y="214.79" width="74.20" height="55.40" fill="none" stroke="#a9cad8" stroke-width="1.3"/>
<rect x="331.92" y="264.72" width="74.20" height="55.40" fill="none" stroke="#a9cad8" stroke-width="1.3"/>
<rect x="331.92" y="314.65" width="74.20" height="55.40" fill="none" stroke="#a9cad8" stroke-width="1.3"/>
<rect x="331.92" y="364.58" width="74.20" height="55.40" fill="none" stroke="#a9cad8" stroke-width="1.3"/>
<rect x="331.92" y="414.51" width="74.20" height="55.40" fill="none" stroke="#a9cad8" stroke-width="1.3"/>
<rect x="331.92" y="464.44" width="74.20" height="55.40" fill="none" stroke="#a9cad8" stroke-width="1.3"/>
<rect x="398.88" y="65.00" width="74.20" height="55.40" fill="none" stroke="#a9cad8" stroke-width="1.3"/>
<rect x="398.88" y="114.93" width="74.20" height="55.40" fill="none" stroke="#a9cad8" stroke-width="1.3"/>
<rect x="398.88" y="164.86" width="74.20" height="55.40" fill="none" stroke="#a9cad8" stroke-width="1.3"/>
<rect x="398.88" y="214.79" width="74.20" height="55.40" fill="none" stroke="#a9cad8" stroke-width="1.3"/>
<rect x="398.88" y="264.72" width="74.20" height="55.40" fill="none" stroke="#a9cad8" stroke-width="1.3"/>
<rect x="398.88" y="314.65" width="74.20" height="55.40" fill="none" stroke="#a9cad8" stroke-width="1.3"/>
<rect x="398.88" y="364.58" width="74.20" height="55.40" fill="none" stroke="#a9cad8" stroke-width="1.3"/>
<rect x="398.88" y="414.51" width="74.20" height="55.40" fill="none" stroke="#a9cad8" stroke-width="1.3"/>
<rect x="398.88" y="464.44" width="74.20" height="55.40" fill="none" stroke="#a9cad8" stroke-width="1.3"/>
<rect x="465.84" y="65.00" width="74.20" height="55.40" fill="none" stroke="#a9cad8" stroke-width="1.3"/>
<rect x="465.84" y="114.93" width="74.20" height="55.40" fill="none" stroke="#a9cad8" stroke-width="1.3"/>
<rect x="465.84" y="164.86" width="74.20" height="55.40" fill="none" stroke="#a9cad8" stroke-width="1.3"/>
<rect x="465.84" y="214.79" width="74.20" height="55.40" fill="none" stroke="#a9cad8" stroke-width="1.3"/>
<rect x="465.84" y="264.72" width="74.20" height="55.40" fill="none" stroke="#a9cad8" stroke-width="1.3"/>
<rect x="465.84" y="314.65" width="74.20" height="55.40" fill="none" stroke="#a9cad8" stroke-width="1.3"/>
<rect x="465.84" y="364.58" width="74.20" height="55.40" fill="none" stroke="#a9cad8" stroke-width="1.3"/>
<rect x="465.84" y="414.51" width="74.20" height="55.40" fill="none" stroke="#a9cad8" stroke-width="1.3"/>
<rect x="465.84" y="464.44" width="74.20" height="55.40" fill="none" stroke="#a9cad8" stroke-width="1.3"/>
<rect x="532.80" y="65.00" width="74.20" height="55.40" fill="none" stroke="#a9cad8" stroke-width="1.3"/>
<rect x="532.80" y="114.93" width="74.20" height="55.40" fill="none" stroke="#a9cad8" stroke-width="1.3"/>
<rect x="532.80" y="164.86" width="74.20" height="55.40" fill="none" stroke="#a9cad8" stroke-width="1.3"/>
<rect x="532.80" y="214.79" width="74.20" height="55.40" fill="none" stroke="#a9cad8" stroke-width="1.3"/>
<rect x="532.80" y="264.72" width="74.20" height="55.40" fill="none" stroke="#a9cad8" stroke-width="1.3"/>
<rect x="532.80" y="314.65" width="74.20" height="55.40" fill="none" stroke="#a9cad8" stroke-width="1.3"/>
<rect x="532.80" y="364.58" width="74.20" height="55.40" fill="none" stroke="#a9cad8" stroke-width="1.3"/>
<rect x="532.80" y="414.51" width="74.20" height="55.40" fill="none" stroke="#a9cad8" stroke-width="1.3"/>
<rect x="532.80" y="464.44" width="74.20" height="55.40" fill="none" stroke="#a9cad8" stroke-width="1.3"/>
<rect x="599.76" y="65.00" width="74.20" height="55.40" fill="none" stroke="#a9cad8" stroke-width="1.3"/>
<rect x="599.76" y="114.93" width="74.20" height="55.40" fill="none" stroke="#a9cad8" stroke-width="1.3"/>
<rect x="599.76" y="164.86" width="74.20" height="55.40" fill="none" stroke="#a9cad8" stroke-width="1.3"/>
<rect x="599.76" y="214.79" width="74.20" height="55.40" fill="none" stroke="#a9cad8" stroke-width="1.3"/>
<rect x="599.76" y="264.72" width="74.20" height="55.40" fill="none" stroke="#a9cad8" stroke-width="1.3"/>
<rect x="599.76" y="314.65" width="74.20" height="55.40" fill="none" stroke="#a9cad8" stroke-width="1.3"/>
<rect x="599.76" y="364.58" width="74.20" height="55.40" fill="none" stroke="#a9cad8" stroke-width="1.3"/>
<rect x="599.76" y="414.51" width="74.20" height="55.40" fill="none" stroke="#a9cad8" stroke-width="1.3"/>
<rect x="599.76" y="464.44" width="74.20" height="55.40" fill="none" stroke="#a9cad8" stroke-width="1.3"/>
<rect x="666.72" y="65.00" width="74.20" height="55.40" fill="none" stroke="#a9cad8" stroke-width="1.3"/>
<rect x="666.72" y="114.93" width="74.20" height="55.40" fill="none" stroke="#a9cad8" stroke-width="1.3"/>
<rect x="666.72" y="164.86" width="74.20" height="55.40" fill="none" stroke="#a9cad8" stroke-width="1.3"/>
<rect x="666.72" y="214.79" width="74.20" height="55.40" fill="none" stroke="#a9cad8" stroke-width="1.3"/>
<rect x="666.72" y="264.72" width="74.20" height="55.40" fill="none" stroke="#a9cad8" stroke-width="1.3"/>
<rect x="666.72" y="314.65" width="74.20" height="55.40" fill="none" stroke="#a9cad8" stroke-width="1.3"/>
<rect x="666.72" y="364.58" width="74.20" height="55.40" fill="none" stroke="#a9cad8" stroke-width="1.3"/>
<rect x="666.72" y="414.51" width="74.20" height="55.40" fill="none" stroke="#a9cad8" stroke-width="1.3"/>
<rect x="666.72" y="464.44" width="74.20" height="55.40" fill="none" stroke="#a9cad8" stroke-width="1.3"/>
<rect x="733.68" y="65.00" width="74.20" height="55.40" fill="none" stroke="#a9cad8" stroke-width="1.3"/>
<rect x="733.68" y="114.93" width="74.20" height="55.40" fill="none" stroke="#a9cad8" stroke-width="1.3"/>
<rect x="733.68" y="164.86" width="74.20" height="55.40" fill="none" stroke="#a9cad8" stroke-width="1.3"/>
<rect x="733.68" y="214.79" width="74.20" height="55.40" fill="none" stroke="#a9cad8" stroke-width="1.3"/>
<rect x="733.68" y="264.72" width="74.20" height="55.40" fill="none" stroke="#a9cad8" stroke-width="1.3"/>
<rect x="733.68" y="314.65" width="74.20" height="55.40" fill="none" stroke="#a9cad8" stroke-width="1.3"/>
<rect x="733.68" y="364.58" width="74.20" height="55.40" fill="none" stroke="#a9cad8" stroke-width="1.3"/>
<rect x="733.68" y="414.51" width="74.20" height="55.40" fill="none" stroke="#a9cad8" stroke-width="1.3"/>
<rect x="733.68" y="464.44" width="74.20" height="55.40" fill="none" stroke="#a9cad8" stroke-width="1.3"/>
<rect x="800.64" y="65.00" width="74.20" height="55.40" fill="none" stroke="#a9cad8" stroke-width="1.3"/>
<rect x="800.64" y="114.93" width="74.20" height="55.40" fill="none" stroke="#a9cad8" stroke-width="1.3"/>
<rect x="800.64" y="164.86" width="74.20" height="55.40" fill="none" stroke="#a9cad8" stroke-width="1.3"/>
<rect x="800.64" y="214.79" width="74.20" height="55.40" fill="none" stroke="#a9cad8" stroke-width="1.3"/>
<rect x="800.64" y="264.72" width="74.20" height="55.40" fill="none" stroke="#a9cad8" stroke-width="1.3"/>
<rect x="800.64" y="314.65" width="74.20" height="55.40" fill="none" stroke="#a9cad8" stroke-width="1.3"/>
<rect x="800.64" y="364.58" width="74.20" height="55.40" fill="none" stroke="#a9cad8" stroke-width="1.3"/>
<rect x="800.64" y="414.51" width="74.20" height="55.40" fill="none" stroke="#a9cad8" stroke-width="1.3"/>
<rect x="800.64" y="464.44" width="74.20" height="55.40" fill="none" stroke="#a9cad8" stroke-width="1.3"/>
<rect x="867.60" y="65.00" width="74.20" height="55.40" fill="none" stroke="#a9cad8" stroke-width="1.3"/>
<rect x="867.60" y="114.93" width="74.20" height="55.40" fill="none" stroke="#a9cad8" stroke-width="1.3"/>
<rect x="867.60" y="164.86" width="74.20" height="55.40" fill="none" stroke="#a9cad8" stroke-width="1.3"/>
<rect x="867.60" y="214.79" width="74.20" height="55.40" fill="none" stroke="#a9cad8" stroke-width="1.3"/>
<rect x="867.60" y="264.72" width="74.20" height="55.40" fill="none" stroke="#a9cad8" stroke-width="1.3"/>
<rect x="867.60" y="314.65" width="74.20" height="55.40" fill="none" stroke="#a9cad8" stroke-width="1.3"/>
<rect x="867.60" y="364.58" width="74.20" height="55.40" fill="none" stroke="#a9cad8" stroke-width="1.3"/>
<rect x="867.60" y="414.51" width="74.20" height="55.40" fill="none" stroke="#a9cad8" stroke-width="1.3"/>
<rect x="867.60" y="464.44" width="74.20" height="55.40" fill="none" stroke="#a9cad8" stroke-width="1.3"/>
<rect x="934.56" y="65.00" width="74.20" height="55.40" fill="none" stroke="#a9cad8" stroke-width="1.3"/>
<rect x="934.56" y="114.93" width="74.20" height="55.40" fill="none" stroke="#a9cad8" stroke-width="1.3"/>
<rect x="934.56" y="164.86" width="74.20" height="55.40" fill="none" stroke="#a9cad8" stroke-width="1.3"/>
<rect x="934.56" y="214.79" width="74.20" height="55.40" fill="none" stroke="#a9cad8" stroke-width="1.3"/>
<rect x="934.56" y="264.72" width="74.20" height="55.40" fill="none" stroke="#a9cad8" stroke-width="1.3"/>
<rect x="934.56" y="314.65" width="74.20" height="55.40" fill="none" stroke="#a9cad8" stroke-width="1.3"/>
<rect x="934.56" y="364.58" width="74.20" height="55.40" fill="none" stroke="#a9cad8" stroke-width="1.3"/>
<rect x="934.56" y="414.51" width="74.20" height="55.40" fill="none" stroke="#a9cad8" stroke-width="1.3"/>
<rect x="934.56" y="464.44" width="74.20" height="55.40" fill="none" stroke="#a9cad8" stroke-width="1.3"/>
<rect x="1001.52" y="65.00" width="74.20" height="55.40" fill="none" stroke="#a9cad8" stroke-width="1.3"/>
<rect x="1001.52" y="114.93" width="74.20" height="55.40" fill="none" stroke="#a9cad8" stroke-width="1.3"/>
<rect x="1001.52" y="164.86" width="74.20" height="55.40" fill="none" stroke="#a9cad8" stroke-width="1.3"/>
<rect x="1001.52" y="214.79" width="74.20" height="55.40" fill="none" stroke="#a9cad8" stroke-width="1.3"/>
<rect x="1001.52" y="264.72" width="74.20" height="55.40" fill="none" stroke="#a9cad8" stroke-width="1.3"/>
<rect x="1001.52" y="314.65" width="74.20" height="55.40" fill="none" stroke="#a9cad8" stroke-width="1.3"/>
<rect x="1001.52" y="364.58" width="74.20" height="55.40" fill="none" stroke="#a9cad8" stroke-width="1.3"/>
<rect x="1001.52" y="414.51" width="74.20" height="55.40" fill="none" stroke="#a9cad8" stroke-width="1.3"/>
<rect x="1001.52" y="464.44" width="74.20" height="55.40" fill="none" stroke="#a9cad8" stroke-width="1.3"/>
<rect x="1068.48" y="65.00" width="74.20" height="55.40" fill="none" stroke="#a9cad8" stroke-width="1.3"/>
<rect x="1068.48" y="114.93" width="74.20" height="55.40" fill="none" stroke="#a9cad8" stroke-width="1.3"/>
<rect x="1068.48" y="164.86" width="74.20" height="55.40" fill="none" stroke="#a9cad8" stroke-width="1.3"/>
<rect x="1068.48" y="214.79" width="74.20" height="55.40" fill="none" stroke="#a9cad8" stroke-width="1.3"/>
<rect x="1068.48" y="264.72" width="74.20" height="55.40" fill="none" stroke="#a9cad8" stroke-width="1.3"/>
<rect x="1068.48" y="314.65" width="74.20" height="55.40" fill="none" stroke="#a9cad8" stroke-width="1.3"/>
<rect x="1068.48" y="364.58" width="74.20" height="55.40" fill="none" stroke="#a9cad8" stroke-width="1.3"/>
<rect x="1068.48" y="414.51" width="74.20" height="55.40" fill="none" stroke="#a9cad8" stroke-width="1.3"/>
<rect x="1068.48" y="464.44" width="74.20" height="55.40" fill="none" stroke="#a9cad8" stroke-width="1.3"/>
<rect x="1135.44" y="65.00" width="74.20" height="55.40" fill="none" stroke="#a9cad8" stroke-width="1.3"/>
<rect x="1135.44" y="114.93" width="74.20" height="55.40" fill="none" stroke="#a9cad8" stroke-width="1.3"/>
<rect x="1135.44" y="164.86" width="74.20" height="55.40" fill="none" stroke="#a9cad8" stroke-width="1.3"/>
<rect x="1135.44" y="214.79" width="74.20" height="55.40" fill="none" stroke="#a9cad8" stroke-width="1.3"/>
<rect x="1135.44" y="264.72" width="74.20" height="55.40" fill="none" stroke="#a9cad8" stroke-width="1.3"/>
<rect x="1135.44" y="314.65" width="74.20" height="55.40" fill="none" stroke="#a9cad8" stroke-width="1.3"/>
<rect x="1135.44" y="364.58" width="74.20" height="55.40" fill="none" stroke="#a9cad8" stroke-width="1.3"/>
<rect x="1135.44" y="414.51" width="74.20" height="55.40" fill="none" stroke="#a9cad8" stroke-width="1.3"/>
<rect x="1135.44" y="464.44" width="74.20" height="55.40" fill="none" stroke="#a9cad8" stroke-width="1.3"/>
<text x="235.1" y="98.0">1</text>
<text x="235.1" y="147.9">2</text>
<text x="235.1" y="197.9">3</text>
<text x="235.1" y="247.8">4</text>
<text x="235.1" y="297.7">5</text>
<text x="235.1" y="347.6">6</text>
<text x="235.1" y="397.6">7</text>
<text x="235.1" y="447.5">8</text>
<text x="235.1" y="497.4">9</text>
<text x="302.1" y="98.0">10</text>
<text x="302.1" y="147.9">11</text>
<text x="302.1" y="197.9">12</text>
<text x="302.1" y="247.8">13</text>
<text x="302.1" y="297.7">14</text>
<text x="302.1" y="347.6">15</text>
<text x="302.1" y="397.6">16</text>
<text x="302.1" y="447.5">17</text>
<text x="302.1" y="497.4">18</text>
<text x="369.0" y="98.0">19</text>
<text x="369.0" y="147.9">20</text>
<text x="369.0" y="197.9">21</text>
<text x="369.0" y="247.8">22</text>
<text x="369.0" y="297.7">23</text>
<text x="369.0" y="347.6">24</text>
<text x="369.0" y="397.6">25</text>
<text x="369.0" y="447.5">26</text>
<text x="369.0" y="497.4">27</text>
<text x="436.0" y="98.0">28</text>
<text x="436.0" y="147.9">29</text>
<text x="436.0" y="197.9">30</text>
<text x="436.0" y="247.8">31</text>
<text x="436.0" y="297.7">32</text>
<text x="436.0" y="347.6">33</text>
<text x="436.0" y="397.6">34</text>
<text x="436.0" y="447.5">35</text>
<text x="436.0" y="497.4">36</text>
<text x="502.9" y="98.0">37</text>
<text x="502.9" y="147.9">38</text>
<text x="502.9" y="197.9">39</text>
<text x="502.9" y="247.8">40</text>
<text x="502.9" y="297.7">41</text>
<text x="502.9" y="347.6">42</text>
<text x="502.9" y="397.6">43</text>
<text x="502.9" y="447.5">44</text>
<text x="502.9" y="497.4">45</text>
<text x="569.9" y="98.0">46</text>
<text x="569.9" y="147.9">47</text>
<text x="569.9" y="197.9">48</text>
<text x="569.9" y="247.8">49</text>
<text x="569.9" y="297.7">50</text>
<text x="569.9" y="347.6">51</text>
<text x="569.9" y="397.6">52</text>
<text x="569.9" y="447.5">53</text>
<text x="569.9" y="497.4">54</text>
<text x="636.9" y="98.0">55</text>
<text x="636.9" y="147.9">56</text>
<text x="636.9" y="197.9">57</text>
<text x="636.9" y="247.8">58</text>
<text x="636.9" y="297.7">59</text>
<text x="636.9" y="347.6">60</text>
<text x="636.9" y="397.6">61</text>
<text x="636.9" y="447.5">62</text>
<text x="636.9" y="497.4">63</text>
<text x="703.8" y="98.0">64</text>
<text x="703.8" y="147.9">65</text>
<text x="703.8" y="197.9">66</text>
<text x="703.8" y="247.8">67</text>
<text x="703.8" y="297.7">68</text>
<text x="703.8" y="347.6">69</text>
<text x="703.8" y="397.6">70</text>
<text x="703.8" y="447.5">71</text>
<text x="703.8" y="497.4">72</text>
<text x="770.8" y="98.0">73</text>
<text x="770.8" y="147.9">74</text>
<text x="770.8" y="197.9">75</text>
<text x="770.8" y="247.8">76</text>
<text x="770.8" y="297.7">77</text>
<text x="770.8" y="347.6">78</text>
<text x="770.8" y="397.6">79</text>
<text x="770.8" y="447.5">80</text>
<text x="770.8" y="497.4">81</text>
<text x="837.7" y="98.0">82</text>
<text x="837.7" y="147.9">83</text>
<text x="837.7" y="197.9">84</text>
<text x="837.7" y="247.8">85</text>
<text x="837.7" y="297.7">86</text>
<text x="837.7" y="347.6">87</text>
<text x="837.7" y="397.6">88</text>
<text x="837.7" y="447.5">89</text>
<text x="837.7" y="497.4">90</text>
<text x="904.7" y="98.0">91</text>
<text x="904.7" y="147.9">92</text>
<text x="904.7" y="197.9">93</text>
<text x="904.7" y="247.8">94</text>
<text x="904.7" y="297.7">95</text>
<text x="904.7" y="347.6">96</text>
<text x="904.7" y="397.6">97</text>
<text x="904.7" y="447.5">98</text>
<text x="904.7" y="497.4">99</text>
<text x="971.7" y="98.0">100</text>
<text x="971.7" y="147.9">101</text>
<text x="971.7" y="197.9">102</text>
<text x="971.7" y="247.8">103</text>
<text x="971.7" y="297.7">104</text>
<text x="971.7" y="347.6">105</text>
<text x="971.7" y="397.6">106</text>
<text x="971.7" y="447.5">107</text>
<text x="971.7" y="497.4">108</text>
<text x="1038.6" y="98.0">109</text>
<text x="1038.6" y="147.9">110</text>
<text x="1038.6" y="197.9">111</text>
<text x="1038.6" y="247.8">112</text>
<text x="1038.6" y="297.7">113</text>
<text x="1038.6" y="347.6">114</text>
<text x="1038.6" y="397.6">115</text>
<text x="1038.6" y="447.5">116</text>
<text x="1038.6" y="497.4">117</text>
<text x="1105.6" y="98.0">118</text>
<text x="1105.6" y="147.9">119</text>
<text x="1105.6" y="197.9">120</text>
<text x="1105.6" y="247.8">121</text>
<text x="1105.6" y="297.7">122</text>
<text x="1105.6" y="347.6">123</text>
<text x="1105.6" y="397.6">124</text>
<text x="1105.6" y="447.5">125</text>
<text x="1105.6" y="497.4">126</text>
<text x="1172.5" y="98.0">127</text>
<text x="1172.5" y="147.9">128</text>
<text x="1172.5" y="197.9">129</text>
<text x="1172.5" y="247.8">130</text>
<text x="1172.5" y="297.7">131</text>
<text x="1172.5" y="347.6">132</text>
<text x="1172.5" y="397.6">133</text>
<text x="1172.5" y="447.5">134</text>
<text x="1172.5" y="497.4">135</text>
<g stroke="#b8b024" stroke-width="1.2"><line x1="35" y1="546.5" x2="151" y2="546.5"/><line x1="35.5" y1="541" x2="35.5" y2="552"/><line x1="150.5" y1="541" x2="150.5" y2="552"/></g>
<text x="107" y="536" style="font-family:'Liberation Mono',monospace;font-size:11.8px;fill:#bcb42a">1000.00 µm</text>
</svg>
<div id="ov" class="a">Position: (4485.39 -407.26 0.00) µm
Value: ch 0: -
       ch 1: -
       ch 2: -</div>
</div>
<div class="a" style="left:5px;top:611px;width:469px;height:213px;border:1px solid #aeaeaa;border-radius:0 3px 3px 3px;background:#f3f3ef"></div>
<div class="a" style="left:50px;top:588px;width:60px;height:24px;border:1px solid #b2b2ae;border-bottom:none;border-radius:3px 3px 0 0;background:linear-gradient(#f0f0ec,#e2e2de)"></div>
<div class="a" style="left:5px;top:584px;width:46px;height:28px;border:1px solid #aeaeaa;border-bottom:none;border-radius:3px 3px 0 0;background:#f3f3ef"></div>
<div class="t" style="left:13px;top:591px;font-size:13px;color:#1c1c1c;">Help</div>
<div class="t" style="left:56px;top:594px;font-size:13.5px;color:#1c1c1c;">Reports</div>
<div class="a" style="left:12px;top:618px;width:438px;height:200px;background:#fffbe0"></div>
<div class="t" style="left:14px;top:622px;font-size:12.5px;color:#1c1c1c;">Selection of acquisition pattern.</div>
<div class="a" style="left:452px;top:616px;width:18px;height:204px;background:#e9e9e5;border-left:1px solid #dcdcd8"></div>
<div class="a" style="left:453px;top:617px;width:16px;height:16px;border:1px solid #b4b4b0;border-radius:2px;background:linear-gradient(#f8f8f4,#e4e4e0)"></div>
<div class="a" style="left:454px;top:633px;width:15px;height:154px;border:1px solid #bcbcb8;border-radius:2px;background:linear-gradient(90deg,#f6f6f2,#dedeDA)"></div>
<div class="a" style="left:453px;top:787px;width:16px;height:16px;border:1px solid #b4b4b0;border-radius:2px;background:linear-gradient(#f8f8f4,#e4e4e0)"></div>
<div class="a" style="left:453px;top:803px;width:16px;height:16px;border:1px solid #b4b4b0;border-radius:2px;background:linear-gradient(#f8f8f4,#e4e4e0)"></div>
<svg class="a" style="left:0;top:0" width="480" height="830"><path d="M456.5,628 L461,623 L465.5,628Z" fill="#111"/><path d="M456.5,798 L461,793 L465.5,798Z" fill="#111"/><path d="M456.5,808 L461,813 L465.5,808Z" fill="#111"/><rect x="457" y="700" width="1" height="1" fill="#c4c4c0"/><rect x="461" y="700" width="1" height="1" fill="#c4c4c0"/><rect x="465" y="700" width="1" height="1" fill="#c4c4c0"/><rect x="457" y="704" width="1" height="1" fill="#c4c4c0"/><rect x="461" y="704" width="1" height="1" fill="#c4c4c0"/><rect x="465" y="704" width="1" height="1" fill="#c4c4c0"/><rect x="457" y="708" width="1" height="1" fill="#c4c4c0"/><rect x="461" y="708" width="1" height="1" fill="#c4c4c0"/><rect x="465" y="708" width="1" height="1" fill="#c4c4c0"/><rect x="457" y="712" width="1" height="1" fill="#c4c4c0"/><rect x="461" y="712" width="1" height="1" fill="#c4c4c0"/><rect x="465" y="712" width="1" height="1" fill="#c4c4c0"/><rect x="457" y="716" width="1" height="1" fill="#c4c4c0"/><rect x="461" y="716" width="1" height="1" fill="#c4c4c0"/><rect x="465" y="716" width="1" height="1" fill="#c4c4c0"/><rect x="457" y="720" width="1" height="1" fill="#c4c4c0"/><rect x="461" y="720" width="1" height="1" fill="#c4c4c0"/><rect x="465" y="720" width="1" height="1" fill="#c4c4c0"/></svg><div class="t" style="left:8.5px;top:843px;font-size:14px;color:#1c1c1c;">Brightness:</div>
<div class="a" style="left:84px;top:837px;width:84px;height:26px;border:1px solid #b6b6b2;border-radius:3px;background:linear-gradient(#f6f6f2,#e6e6e2)"></div>
<div class="a" style="left:150px;top:838px;width:1px;height:24px;background:#c0c0bc"></div>
<div class="t" style="left:89px;top:843px;font-size:14px;color:#1c1c1c;">Master</div>
<div class="a" style="left:168px;top:837px;width:25px;height:26px;border:1px solid #c0c0bc;border-radius:3px;background:linear-gradient(#f6f6f2,#e8e8e4)"></div>
<div class="a" style="left:193px;top:847px;width:103px;height:4px;border:1px solid #d0d0cc;border-radius:2px;background:#ececE8"></div>
<div class="a" style="left:295px;top:837px;width:26px;height:26px;border:1px solid #b6b6b2;border-radius:3px;background:linear-gradient(#f6f6f2,#e6e6e2)"></div>
<div class="t" style="left:326.5px;top:843px;font-size:14px;color:#1c1c1c;">Gamma:</div>
<div class="a" style="left:389px;top:837px;width:84px;height:26px;border:1px solid #b6b6b2;border-radius:3px;background:linear-gradient(#f6f6f2,#e6e6e2)"></div>
<div class="a" style="left:456px;top:838px;width:1px;height:24px;background:#c0c0bc"></div>
<div class="t" style="left:393px;top:843px;font-size:14px;width:58px;overflow:hidden">Compress</div>
<svg class="a" style="left:0;top:830px" width="480" height="40"><path d="M154,17 L163,17 L158.5,22Z" fill="#111"/><path d="M460,17 L469,17 L464.5,22Z" fill="#111"/><path d="M260.5,11.5 L271.5,11.5 L271.5,22 L266,27 L260.5,22Z" fill="#f4f4f0" stroke="#a8a8a4"/><path d="M174,24 Q172,19 177,18 Q179,13 184,16 Q189,15 189,20 Q191,24 187,25 L176,25Z" fill="#e2e2e0" stroke="#b0b0ae" stroke-width="1"/><circle cx="308" cy="19.5" r="5" fill="#f6c52c" stroke="#e0a010" stroke-width="0.8"/><line x1="314.0" y1="19.5" x2="316.0" y2="19.5" stroke="#f0b820" stroke-width="1.3"/><line x1="313.2" y1="22.5" x2="314.9" y2="23.5" stroke="#f0b820" stroke-width="1.3"/><line x1="311.0" y1="24.7" x2="312.0" y2="26.4" stroke="#f0b820" stroke-width="1.3"/><line x1="308.0" y1="25.5" x2="308.0" y2="27.5" stroke="#f0b820" stroke-width="1.3"/><line x1="305.0" y1="24.7" x2="304.0" y2="26.4" stroke="#f0b820" stroke-width="1.3"/><line x1="302.8" y1="22.5" x2="301.1" y2="23.5" stroke="#f0b820" stroke-width="1.3"/><line x1="302.0" y1="19.5" x2="300.0" y2="19.5" stroke="#f0b820" stroke-width="1.3"/><line x1="302.8" y1="16.5" x2="301.1" y2="15.5" stroke="#f0b820" stroke-width="1.3"/><line x1="305.0" y1="14.3" x2="304.0" y2="12.6" stroke="#f0b820" stroke-width="1.3"/><line x1="308.0" y1="13.5" x2="308.0" y2="11.5" stroke="#f0b820" stroke-width="1.3"/><line x1="311.0" y1="14.3" x2="312.0" y2="12.6" stroke="#f0b820" stroke-width="1.3"/><line x1="313.2" y1="16.5" x2="314.9" y2="15.5" stroke="#f0b820" stroke-width="1.3"/></svg><div class="a" style="left:12px;top:881px;width:456px;height:17px;border:1px solid #c8c8c4;border-bottom:2px solid #8a8a88;border-right:2px solid #9a9a98;background:#f3f3ef"></div>
<div class="a" style="left:147px;top:882px;width:83px;height:14px;background:#a9d3e4"></div>
<div class="t" style="left:33px;top:883px;font-size:10.5px;color:#1c1c1c;font-weight:bold;color:#111">Channels &amp; Colors</div>
<div class="t" style="left:166px;top:883px;font-size:10.5px;color:#1c1c1c;font-weight:bold;color:#111">Contrast</div>
<div class="t" style="left:249px;top:883px;font-size:10.5px;color:#1c1c1c;font-weight:bold;color:#111">Zoom</div>
<div class="t" style="left:318px;top:883px;font-size:10.5px;color:#1c1c1c;font-weight:bold;color:#111">Time frame</div>
<div class="t" style="left:416px;top:883px;font-size:10.5px;color:#1c1c1c;font-weight:bold;color:#111">Slicer</div>
<div class="a" style="left:0px;top:909px;width:1342px;height:1px;background:#d6d6d2"></div>
<div class="a" style="left:164px;top:909px;width:1px;height:29px;background:#a8a8a4"></div>
<div class="a" style="left:329px;top:909px;width:1px;height:29px;background:#a8a8a4"></div>
<div class="a" style="left:553px;top:909px;width:1px;height:29px;background:#a8a8a4"></div>
<div class="a" style="left:334px;top:912px;width:216px;height:24px;border:1px solid #b4b4b0;border-radius:3px;background:#fdfdf8"></div>
<div class="t" style="left:4px;top:919px;font-size:11px;color:#1c1c1c;">Ready</div>
<div class="a" style="left:480px;top:592px;width:857px;height:312px;border:1px solid #c4c4c0;border-radius:4px;box-shadow:inset 1px 1px 0 #fafaf6"></div>
<div class="a" style="left:798px;top:585px;width:224px;height:14px;background:#f3f3ef"></div>
<div class="t" style="left:801px;top:584px;font-size:14px;color:#4c78a2;">Stitching wizard - Pattern selection</div>
<div class="t" style="left:489px;top:635.5px;font-size:12.6px;color:#1c1c1c;">Select an acquisition pattern for the loaded fileserie:</div>
<div class="t" style="left:483px;top:671px;font-size:14px;color:#1c1c1c;">Acquisition pattern:</div>
<div class="t" style="left:483px;top:696px;font-size:14px;color:#1c1c1c;">Acquisition start:</div>
<div class="t" style="left:483px;top:719px;font-size:14px;color:#1c1c1c;">Acquisition overlap (%):</div>
<div class="t" style="left:483px;top:739px;font-size:14px;color:#1c1c1c;letter-spacing:0.15px">Pattern width (number of tiles):</div>
<div class="a" style="left:1132px;top:667px;width:191px;height:24px;border:1px solid #b4b4b0;border-radius:3px;background:#fdfdf5"></div>
<div class="a" style="left:1306px;top:668px;width:16px;height:22px;border-left:1px solid #c0c0bc;background:linear-gradient(#f4f4f0,#e2e2de)"></div>
<div class="t" style="left:1133px;top:672px;width:173px;text-align:center;font-size:14px;color:#1c1c1c">Column line</div>
<div class="a" style="left:1132px;top:692px;width:191px;height:24px;border:1px solid #b4b4b0;border-radius:3px;background:#fdfdf5"></div>
<div class="a" style="left:1306px;top:693px;width:16px;height:22px;border-left:1px solid #c0c0bc;background:linear-gradient(#f4f4f0,#e2e2de)"></div>
<div class="t" style="left:1133px;top:697px;width:173px;text-align:center;font-size:14px;color:#1c1c1c">Top left</div>
<div class="a" style="left:1207px;top:717px;width:116px;height:19px;border:1px solid #a8a8a4;border-top:2px solid #b8b8b4;background:#f4f4f0"></div>
<div class="a" style="left:1309px;top:718px;width:13px;height:17px;background:linear-gradient(#f4f4f0,#e0e0dc);border-left:1px solid #d0d0cc"></div>
<div class="t" style="left:1214px;top:719.5px;font-size:14px;color:#1c1c1c;">10</div>
<div class="a" style="left:1207px;top:737px;width:116px;height:19px;border:1px solid #a8a8a4;border-top:2px solid #b8b8b4;background:#f4f4f0"></div>
<div class="a" style="left:1309px;top:738px;width:13px;height:17px;background:linear-gradient(#f4f4f0,#e0e0dc);border-left:1px solid #d0d0cc"></div>
<div class="t" style="left:1214px;top:739.5px;font-size:14px;color:#1c1c1c;">15</div>
<svg class="a" style="left:1100px;top:660px" width="240" height="100"><path d="M1310,17 L1319,17 L1314.5,22Z" transform="translate(-1100,0)" fill="#111"/><path d="M1310,42 L1319,42 L1314.5,47Z" transform="translate(-1100,0)" fill="#111"/><path d="M211,64 L219,64 L215,60Z" fill="#111"/><path d="M211,69 L219,69 L215,73Z" fill="#111"/><path d="M211,84 L219,84 L215,80Z" fill="#111"/><path d="M211,89 L219,89 L215,93Z" fill="#111"/></svg><div class="a" style="left:482px;top:757px;width:92px;height:53px;border:1px solid #b8b8b4;border-radius:3px;background:linear-gradient(#f5f5f1,#e4e4e0)"></div>
<div class="t" style="left:482px;top:791px;width:92px;text-align:center;font-size:14px;color:#1c1c1c">Flip tiles in x</div>
<svg class="a" style="left:515px;top:762px" width="24" height="24" viewBox="0 0 24 24"><rect x="1.5" y="1.5" width="21" height="21" rx="1" fill="#f4f4f0" stroke="#4a8ad0" stroke-width="1.3"/><rect x="3" y="3" width="18" height="18" fill="#8cd0f0"/><path d="M3,3 L9,3 L13,10 L11,21 L3,21Z" fill="#9ccc30"/><path d="M9,3 L12.5,3 L17,11 L15,21 L11,21 L13,10Z" fill="#f2dcb0"/><path d="M15,3 V21 M18,3 V21 M3,8 H21 M3,13 H21" stroke="#c8eaf8" stroke-width="0.6" opacity="0.7"/><path d="M4.5,4 L9,11 L8,20" fill="none" stroke="#d04818" stroke-width="1.2" stroke-dasharray="1.6 1.4"/><path d="M0.5,12 L5,7.5 L5,10.3 L19,10.3 L19,7.5 L23.5,12 L19,16.5 L19,13.7 L5,13.7 L5,16.5Z" fill="#6aa8e8" stroke="#3f80cc" stroke-width="0.6"/></svg>
<div class="a" style="left:575px;top:757px;width:91px;height:53px;border:1px solid #b8b8b4;border-radius:3px;background:linear-gradient(#f5f5f1,#e4e4e0)"></div>
<div class="t" style="left:575px;top:791px;width:91px;text-align:center;font-size:14px;color:#1c1c1c">Flip tiles in y</div>
<svg class="a" style="left:608px;top:762px" width="24" height="24" viewBox="0 0 24 24"><rect x="1.5" y="1.5" width="21" height="21" rx="1" fill="#f4f4f0" stroke="#4a8ad0" stroke-width="1.3"/><rect x="3" y="3" width="18" height="18" fill="#8cd0f0"/><path d="M3,3 L9,3 L13,10 L11,21 L3,21Z" fill="#9ccc30"/><path d="M9,3 L12.5,3 L17,11 L15,21 L11,21 L13,10Z" fill="#f2dcb0"/><path d="M15,3 V21 M18,3 V21 M3,8 H21 M3,13 H21" stroke="#c8eaf8" stroke-width="0.6" opacity="0.7"/><path d="M4.5,4 L9,11 L8,20" fill="none" stroke="#d04818" stroke-width="1.2" stroke-dasharray="1.6 1.4"/><path d="M14,0.5 L18.5,5 L15.7,5 L15.7,19 L18.5,19 L14,23.5 L9.5,19 L12.3,19 L12.3,5 L9.5,5Z" fill="#6aa8e8" stroke="#3f80cc" stroke-width="0.6"/></svg>
<div class="a" style="left:667px;top:757px;width:107px;height:53px;border:1px solid #b8b8b4;border-radius:3px;background:linear-gradient(#f5f5f1,#e4e4e0)"></div>
<div class="t" style="left:667px;top:791px;width:107px;text-align:center;font-size:14px;color:#1c1c1c">Swap tiles in xy</div>
<svg class="a" style="left:708px;top:762px" width="24" height="24" viewBox="0 0 24 24"><rect x="1.5" y="1.5" width="21" height="21" rx="1" fill="#f4f4f0" stroke="#4a8ad0" stroke-width="1.3"/><rect x="3" y="3" width="18" height="18" fill="#8cd0f0"/><path d="M3,3 L9,3 L13,10 L11,21 L3,21Z" fill="#9ccc30"/><path d="M9,3 L12.5,3 L17,11 L15,21 L11,21 L13,10Z" fill="#f2dcb0"/><path d="M15,3 V21 M18,3 V21 M3,8 H21 M3,13 H21" stroke="#c8eaf8" stroke-width="0.6" opacity="0.7"/><path d="M4.5,4 L9,11 L8,20" fill="none" stroke="#d04818" stroke-width="1.2" stroke-dasharray="1.6 1.4"/><path d="M0.5,12 L5,7.5 L5,10.3 L10.3,10.3 L10.3,5 L7.5,5 L12,0.5 L16.5,5 L13.7,5 L13.7,10.3 L19,10.3 L19,7.5 L23.5,12 L19,16.5 L19,13.7 L13.7,13.7 L13.7,19 L16.5,19 L12,23.5 L7.5,19 L10.3,19 L10.3,13.7 L5,13.7 L5,16.5Z" fill="#6aa8e8" stroke="#3f80cc" stroke-width="0.6"/></svg>
<div class="a" style="left:775px;top:757px;width:125px;height:53px;border:1px solid #b8b8b4;border-radius:3px;background:linear-gradient(#f5f5f1,#e4e4e0)"></div>
<div class="t" style="left:775px;top:791px;width:125px;text-align:center;font-size:14px;color:#1c1c1c">Show tile contents</div>
<svg class="a" style="left:824px;top:762px" width="24" height="24" viewBox="0 0 24 24"><rect x="1.5" y="1.5" width="21" height="21" rx="1" fill="#f4f4f0" stroke="#4a8ad0" stroke-width="1.3"/><rect x="3" y="3" width="18" height="18" fill="#8cd0f0"/><path d="M3,3 L9,3 L13,10 L11,21 L3,21Z" fill="#9ccc30"/><path d="M9,3 L12.5,3 L17,11 L15,21 L11,21 L13,10Z" fill="#f2dcb0"/><path d="M15,3 V21 M18,3 V21 M3,8 H21 M3,13 H21" stroke="#c8eaf8" stroke-width="0.6" opacity="0.7"/><path d="M4.5,4 L9,11 L8,20" fill="none" stroke="#d04818" stroke-width="1.2" stroke-dasharray="1.6 1.4"/><circle cx="15" cy="14.5" r="5" fill="#d8eefa" fill-opacity="0.75" stroke="#6a7a8a" stroke-width="1.6"/><path d="M18.8,18.3 L22.5,22" stroke="#e8a030" stroke-width="2.8" stroke-linecap="round"/></svg>
<div class="a" style="left:910px;top:757px;width:94px;height:53px;border:1px solid #b8b8b4;border-radius:3px;background:linear-gradient(#f5f5f1,#e4e4e0)"></div>
<div class="t" style="left:910px;top:791px;width:94px;text-align:center;font-size:14px;color:#1c1c1c">Reset pattern</div>
<svg class="a" style="left:944px;top:762px" width="24" height="24" viewBox="0 0 24 24"><g fill="#6aa8e8" stroke="#3a78c0" stroke-width="0.9" stroke-linejoin="round" transform="translate(12 12) scale(1.12) translate(-12 -12)"><path d="M3.5,12 A8.5,8.5 0 0 1 18.5,6.5 L20.5,3.5 L21.5,12 L13.5,10.5 L16.3,8.3 A5.5,5.5 0 0 0 6.5,12 Z"/><path d="M20.5,12 A8.5,8.5 0 0 1 5.5,17.5 L3.5,20.5 L2.5,12 L10.5,13.5 L7.7,15.7 A5.5,5.5 0 0 0 17.5,12 Z"/></g></svg>
<div class="a" style="left:482px;top:875px;width:426px;height:27px;border:1px solid #b8b8b4;border-radius:3px;background:linear-gradient(#f2f2ee,#e4e4e0)"></div>
<div class="a" style="left:908px;top:875px;width:426px;height:27px;border:1px solid #b8b8b4;border-radius:3px;background:linear-gradient(#f2f2ee,#e4e4e0)"></div>
<svg class="a" style="left:0;top:870px" width="1342" height="40"><defs><linearGradient id="ag" x1="0" y1="0" x2="0" y2="1"><stop offset="0" stop-color="#8ad08a"/><stop offset="1" stop-color="#3c9a40"/></linearGradient></defs><path d="M687,18.5 L693,13.5 L693,16 L702,16 L702,21 L693,21 L693,23.5Z" fill="url(#ag)" stroke="#3a8a3a" stroke-width="0.5"/><path d="M1128,18.5 L1122,13.5 L1122,16 L1113,16 L1113,21 L1122,21 L1122,23.5Z" fill="url(#ag)" stroke="#3a8a3a" stroke-width="0.5"/></svg>
</body></html>
